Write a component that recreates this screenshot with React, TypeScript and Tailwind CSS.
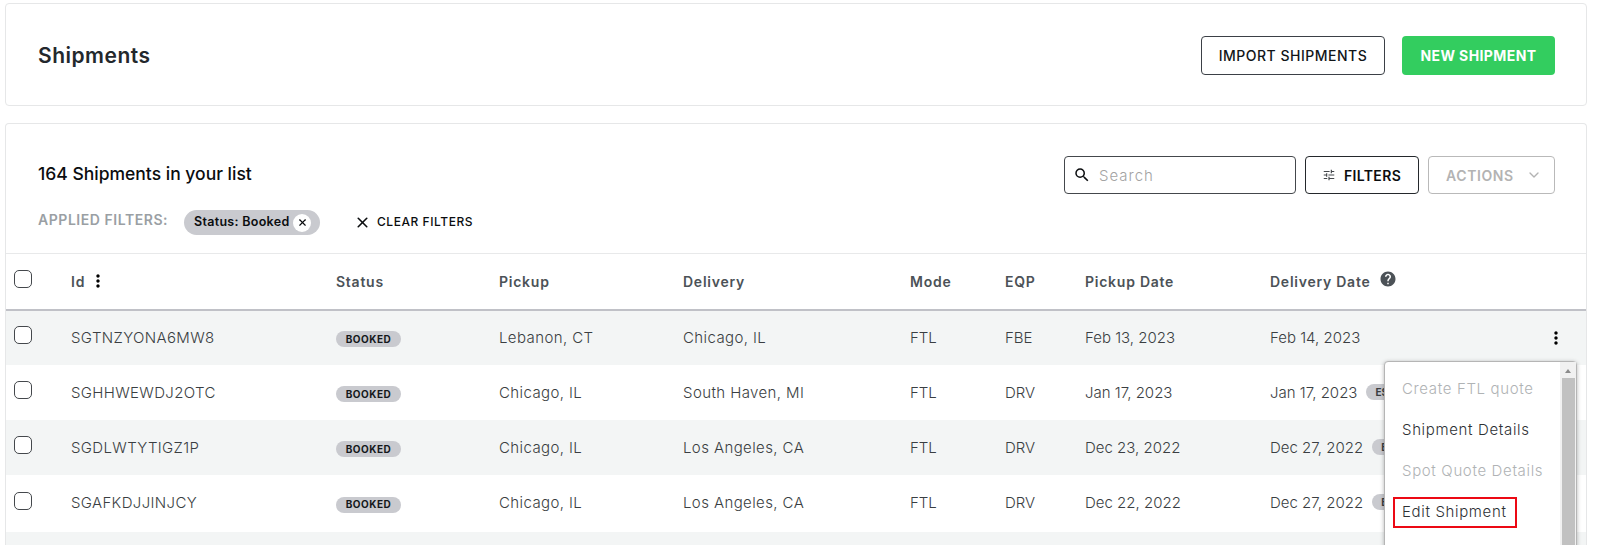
import { useState } from "react";
import { MdHelp, MdSearch, MdTune, MdMoreVert } from "react-icons/md";
import { ChevronDown, X } from "lucide-react";

type TShipment = {
  id: string;
  pickup: string;
  delivery: string;
  mode: string;
  eqp: string;
  pickupDate: string;
  deliveryDate: string;
  estimated: string;
  height: string;
};

const SHIPMENTS: TShipment[] = [
  { id: "SGTNZYONA6MW8", pickup: "Lebanon, CT", delivery: "Chicago, IL", mode: "FTL", eqp: "FBE", pickupDate: "Feb 13, 2023", deliveryDate: "Feb 14, 2023", estimated: "", height: "h-[54px]" },
  { id: "SGHHWEWDJ2OTC", pickup: "Chicago, IL", delivery: "South Haven, MI", mode: "FTL", eqp: "DRV", pickupDate: "Jan 17, 2023", deliveryDate: "Jan 17, 2023", estimated: "ES", height: "h-[55px] pt-px" },
  { id: "SGDLWTYTIGZ1P", pickup: "Chicago, IL", delivery: "Los Angeles, CA", mode: "FTL", eqp: "DRV", pickupDate: "Dec 23, 2022", deliveryDate: "Dec 27, 2022", estimated: "E", height: "h-[55px] pt-px" },
  { id: "SGAFKDJJINJCY", pickup: "Chicago, IL", delivery: "Los Angeles, CA", mode: "FTL", eqp: "DRV", pickupDate: "Dec 22, 2022", deliveryDate: "Dec 27, 2022", estimated: "E", height: "h-[57px]" },
];

const MENU_ITEMS = [
  { label: "Create FTL quote", disabled: true },
  { label: "Shipment Details", disabled: false },
  { label: "Spot Quote Details", disabled: true },
  { label: "Edit Shipment", disabled: false },
];

// Shared by the table head and every row
const COLUMNS =
  "grid grid-cols-[65px_265px_163px_184px_227px_95px_80px_185px_1fr] items-center whitespace-nowrap";

const Checkbox = ({ checked, onChange }: { checked: boolean; onChange: () => void }) => (
  <button
    type="button"
    role="checkbox"
    aria-checked={checked}
    onClick={onChange}
    className="mb-[6px] ml-2 block size-[18px] rounded-[5px] border border-[#44484c] bg-white"
  />
);

const ActionsMenu = () => (
  <div className="absolute top-[50px] right-[9px] z-10 flex h-[300px] w-[193px] rounded-t border border-[#b5b5b5] bg-white shadow-[0_1px_4px_rgba(0,0,0,0.3)]">
    <ul className="flex-1 pt-[7px] text-[15px] font-light tracking-[0.65px]">
      {MENU_ITEMS.map((item) => (
        <li
          key={item.label}
          className={`flex h-[41px] items-center pl-[17px] whitespace-nowrap ${item.disabled ? "text-[#b0b3b5]" : "text-[#2e3134]"}`}
        >
          {item.label === "Edit Shipment" ? (
            <span className="-ml-[9px] flex h-[31px] w-[124px] items-center border-2 border-[#ec0914] pb-px pl-[7px]">
              {item.label}
            </span>
          ) : (
            item.label
          )}
        </li>
      ))}
    </ul>
    <div className="flex w-[16px] flex-col items-center bg-[#f1f1f1] pt-[7px]">
      <span className="border-x-[3.5px] border-b-4 border-x-transparent border-b-[#8b8b8b]" />
      <span className="mt-[5px] w-[13px] flex-1 bg-[#c1c1c1]" />
    </div>
  </div>
);

const App = () => {
  const [search, setSearch] = useState("");
  const [selected, setSelected] = useState<string[]>([]);

  const toggle = (id: string) => {
    setSelected((prev) => (prev.includes(id) ? prev.filter((s) => s !== id) : [...prev, id]));
  };

  const toggleAll = () => {
    setSelected((prev) => (prev.length ? [] : SHIPMENTS.map((s) => s.id)));
  };

  return (
    <div className="h-[559px] bg-white font-['Inter',sans-serif]">
      <div className="flex h-[545px] flex-col overflow-hidden pt-[3px] pr-[13px] pl-[5px]">
        <header className="flex h-[103px] shrink-0 items-center justify-between rounded border border-[#e6e7e8] pr-[31px] pl-8">
          <h1 className="pt-[2px] text-[21px] font-semibold tracking-[0.5px] text-[#23282c]">Shipments</h1>
          <div className="flex gap-[17px] pt-px text-[14px]">
            <button className="h-[39px] w-[184px] rounded border border-[#3b4046] font-medium tracking-[0.5px] text-[#111518]">
              IMPORT SHIPMENTS
            </button>
            <button className="h-[39px] w-[153px] rounded bg-[#33cd5f] font-bold tracking-[0.4px] text-white">
              NEW SHIPMENT
            </button>
          </div>
        </header>

        <section className="mt-[17px] flex-1 rounded-t border border-b-0 border-[#e6e7e8]">
          <div className="flex h-[129px] justify-between pt-8 pr-[31px] pl-8">
            <div>
              <h2 className="pt-1 text-[17.5px] leading-7 font-medium text-[#0b0d0f]">164 Shipments in your list</h2>
              <div className="mt-[22px] flex h-[25px] items-center">
                <span className="mb-[6px] w-[146px] text-[14px] font-semibold tracking-[0.55px] text-[#9a9fa4]">
                  APPLIED FILTERS:
                </span>
                <span className="flex h-[25px] w-[136px] items-center justify-between rounded-full bg-[#c9cacf] pr-[9px] pl-[10px] text-[12.5px] font-semibold tracking-[0.3px] text-[#0b0d0f]">
                  Status: Booked
                  <button className="flex size-[18px] items-center justify-center rounded-full bg-white">
                    <X className="size-[11px]" strokeWidth={2.5} />
                  </button>
                </span>
                <button className="mb-px ml-[34px] flex items-center gap-[6px] text-[12px] font-medium tracking-[0.55px] text-[#0b0d0f]">
                  <X className="size-[17px]" strokeWidth={2.3} />
                  CLEAR FILTERS
                </button>
              </div>
            </div>
            <div className="flex gap-[9px] text-[14px] font-medium">
              <label className="flex h-[38px] w-[232px] items-center rounded border border-[#44484c] pl-[8px]">
                <MdSearch className="size-[18px] text-[#0b0d0f]" />
                <input
                  value={search}
                  onChange={(e) => setSearch(e.target.value)}
                  placeholder="Search"
                  className="mt-[2px] ml-2 w-[180px] text-[15px] font-light tracking-[1px] outline-none placeholder:text-[#a3a3a3]"
                />
              </label>
              <button className="flex h-[38px] w-[114px] items-center rounded border border-[#24282c] pl-[16px] font-semibold tracking-[0.35px] text-[#0b0d0f]">
                <MdTune className="mr-2 size-[14px] text-[#44484c]" />
                FILTERS
              </button>
              <button className="flex h-[38px] w-[127px] items-center justify-between rounded border border-[#b9b9b9] pr-3 pl-[17px] font-semibold tracking-[0.6px] text-[#b3b3b3]">
                ACTIONS
                <ChevronDown className="size-4" />
              </button>
            </div>
          </div>

          <div className={`${COLUMNS} h-[58px] border-t border-b-2 border-t-[#e8e9ea] border-b-[#c0c1c7] text-[14px] font-semibold tracking-[0.75px] text-[#4c5257]`}>
            <Checkbox checked={selected.length > 0} onChange={toggleAll} />
            <span className="flex items-center gap-[3px] pb-px">
              Id
              <MdMoreVert className="size-5 text-black" />
            </span>
            <span className="pb-px">Status</span>
            <span className="pb-px">Pickup</span>
            <span className="pb-px">Delivery</span>
            <span className="pb-px">Mode</span>
            <span className="pb-px">EQP</span>
            <span className="pb-px">Pickup Date</span>
            <span className="flex items-center gap-[9px] pb-px">
              Delivery Date
              <MdHelp className="mb-1 size-[18px]" />
            </span>
          </div>

          {SHIPMENTS.map((shipment, index) => (
            <div
              key={shipment.id}
              className={`${COLUMNS} ${shipment.height} relative text-[15px] font-light text-[#3a3e42] ${index % 2 === 0 ? "bg-[#f3f5f5]" : "bg-white"}`}
            >
              <Checkbox checked={selected.includes(shipment.id)} onChange={() => toggle(shipment.id)} />
              <span className="tracking-[0.35px]">{shipment.id}</span>
              <span className="mt-[2px] flex h-4 w-[65px] items-center justify-center rounded-full bg-[#c9cacf] text-[10px] font-bold tracking-[0.5px] text-[#15191c]">
                BOOKED
              </span>
              <span className="tracking-[0.4px]">{shipment.pickup}</span>
              <span className="tracking-[0.4px]">{shipment.delivery}</span>
              <span>{shipment.mode}</span>
              <span>{shipment.eqp}</span>
              <span>{shipment.pickupDate}</span>
              <span className="flex items-center">
                {shipment.deliveryDate}
                {shipment.estimated && (
                  <span className="mb-[3px] ml-[9px] h-4 w-12 rounded-full bg-[#c9cacf] pl-[9px] text-[10px] leading-4 font-bold">
                    {shipment.estimated}
                  </span>
                )}
                {index === 0 && (
                  <button className="mr-[20px] ml-auto">
                    <MdMoreVert className="size-5 text-black" />
                  </button>
                )}
              </span>
              {index === 0 && <ActionsMenu />}
            </div>
          ))}
          <div className="h-[13px] bg-[#f3f5f5]" />
        </section>
      </div>
    </div>
  );
};

export default App;
